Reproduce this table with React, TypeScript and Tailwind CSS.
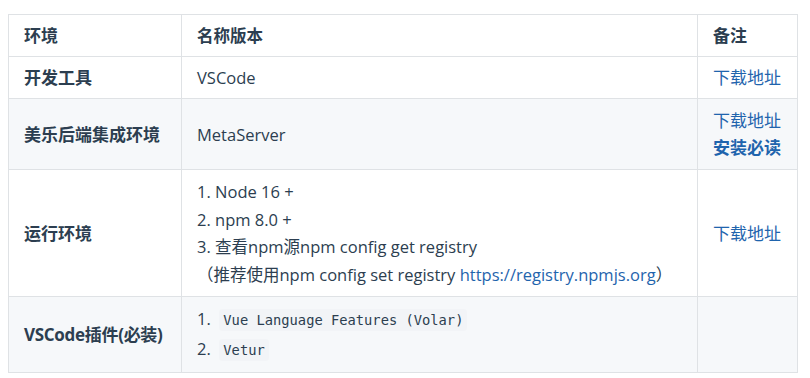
import React from 'react';

// 开发环境说明表

const link = 'text-[#1f64ad] no-underline';

const Code: React.FC<{ children: React.ReactNode }> = ({ children }) => (
  <code className="font-['DejaVu_Sans_Mono',monospace] text-[13.75px] text-[#2c3e50] bg-[rgba(27,31,35,0.015)] rounded-[3px] px-[4px] py-[3px]">
    {children}
  </code>
);

const App: React.FC = () => {
  const cell = 'border border-[#dfe2e5] px-[15px] py-[8px] align-middle';
  const head = `${cell} text-left font-bold`;
  const mid = `${cell} text-[16.5px]`;

  return (
    <div className="bg-white w-[810px] h-[378px] pt-[14px] pl-[8px] font-['Open_Sans','Noto_Sans_CJK_SC',sans-serif] text-[17px] text-[#2c3e50]">
      <table className="border-collapse table-fixed w-[789px] leading-[25px]">
        <thead>
          <tr className="bg-white">
            <th className={`${head} w-[173px]`}>环境</th>
            <th className={`${head} w-[516px] text-[16.5px]`}>名称版本</th>
            <th className={`${head} w-[100px]`}>备注</th>
          </tr>
        </thead>
        <tbody>
          <tr className="bg-white">
            <td className={`${cell} font-bold`}>开发工具</td>
            <td className={mid}>VSCode</td>
            <td className={`${cell} whitespace-nowrap`}>
              <a className={link}>下载地址</a>
            </td>
          </tr>
          <tr className="bg-[#f6f8fa]">
            <td className={`${cell} font-bold`}>美乐后端集成环境</td>
            <td className={mid}>MetaServer</td>
            <td className={`${cell} leading-[27px] whitespace-nowrap`}>
              <a className={link}>下载地址</a>
              <br />
              <a className={`${link} font-bold`}>安装必读</a>
            </td>
          </tr>
          <tr className="bg-white">
            <td className={`${cell} font-bold`}>运行环境</td>
            <td className={`${mid} leading-[27.5px]`}>
              1. Node 16 +
              <br />
              2. npm 8.0 +
              <br />
              3. 查看npm源npm config get registry
              <br />
              （推荐使用npm config set registry <a className={link}>https://registry.npmjs.org</a>）
            </td>
            <td className={`${cell} whitespace-nowrap`}>
              <a className={link}>下载地址</a>
            </td>
          </tr>
          <tr className="bg-[#f6f8fa]">
            <td className={`${cell} font-bold whitespace-nowrap tracking-[-0.3px]`}>VSCode插件(必装)</td>
            <td className={`${mid} leading-[27.5px]`}>
              <ol className="list-none m-0 p-0">
                <li>
                  1.&nbsp; <Code>Vue Language Features (Volar)</Code>
                </li>
                <li>
                  2.&nbsp; <Code>Vetur</Code>
                </li>
              </ol>
            </td>
            <td className={cell}></td>
          </tr>
        </tbody>
      </table>
    </div>
  );
};

export default App;
